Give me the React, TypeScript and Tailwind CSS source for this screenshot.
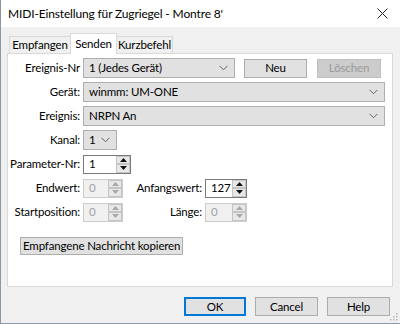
import React from "react";

const font = { fontFamily: 'Lato, "Liberation Sans", sans-serif' };

function Chevron({ className }: { className?: string }) {
  return (
    <svg width="9" height="6" viewBox="0 0 9 6" className={className}>
      <path d="M0.5 0.8 L4.5 4.8 L8.5 0.8" fill="none" stroke="#606060" strokeWidth="1" />
    </svg>
  );
}

function Combo({ value, width }: { value: string; width: string }) {
  return (
    <div
      className={`${width} h-[20px] flex items-center justify-between bg-[#e1e1e1] border border-[#adadad] pl-[5px] pr-[6px] text-black`}
    >
      <span className="leading-none whitespace-nowrap">{value}</span>
      <Chevron />
    </div>
  );
}

function Arrow({ up, disabled }: { up?: boolean; disabled?: boolean }) {
  return (
    <div className="flex-1 flex items-center justify-center bg-[#e8e8e8] border border-[#c4c4c4]">
      <svg width="7" height="4" viewBox="0 0 7 4">
        <path
          d={up ? "M0 4 L3.5 0 L7 4 Z" : "M0 0 L3.5 4 L7 0 Z"}
          fill={disabled ? "#a8a8a8" : "#111111"}
        />
      </svg>
    </div>
  );
}

function Spin({ value, width, disabled }: { value: string; width: string; disabled?: boolean }) {
  return (
    <div
      className={`${width} h-[19px] flex border shrink-0 ${
        disabled ? "border-[#cccccc] bg-[#f0f0f0]" : "border-[#7a7a7a] bg-white"
      }`}
    >
      <div
        className={`flex-1 flex items-center pl-[5px] ${disabled ? "text-[#a0a0a0]" : "text-black"}`}
      >
        {value}
      </div>
      <div className="w-[14px] flex flex-col">
        <Arrow up disabled={disabled} />
        <Arrow disabled={disabled} />
      </div>
    </div>
  );
}

function Btn({
  label,
  width,
  disabled,
  focused,
}: {
  label: string;
  width: string;
  disabled?: boolean;
  focused?: boolean;
}) {
  return (
    <div
      className={`${width} h-[19px] flex items-center justify-center shrink-0 ${
        disabled
          ? "bg-[#cccccc] border border-[#bfbfbf] text-[#9a9a9a]"
          : focused
          ? "bg-[#e1e1e1] border-2 border-[#0078d7] text-black"
          : "bg-[#e1e1e1] border border-[#adadad] text-black"
      }`}
    >
      {label}
    </div>
  );
}

function Label({ text, width }: { text: string; width: string }) {
  return <div className={`${width} text-right pr-[3px] shrink-0 whitespace-nowrap`}>{text}</div>;
}

export default function App() {
  return (
    <div
      style={font}
      className="w-[400px] h-[324px] flex flex-col bg-[#f0f0f0] border-l border-b border-[#8a97a5] text-[11.5px] tracking-[-0.15px] text-black overflow-hidden relative"
    >
      {/* title bar */}
      <div className="h-[27px] bg-white flex items-center justify-between pl-[7px] pr-[12px] shrink-0">
        <span className="text-[12px]">MIDI-Einstellung für Zugriegel - Montre 8'</span>
        <svg width="11" height="11" viewBox="0 0 11 11">
          <path d="M0.5 0.5 L10.5 10.5 M10.5 0.5 L0.5 10.5" stroke="#222" strokeWidth="1" />
        </svg>
      </div>

      {/* tabs */}
      <div className="flex items-end h-[26px] pl-[8px] shrink-0">
        <div className="h-[17px] w-[62px] flex items-center justify-center bg-[#f0f0f0] border border-b-0 border-[#d9d9d9]">
          Empfangen
        </div>
        <div className="h-[21px] w-[47px] flex items-center justify-center bg-white border border-b-0 border-[#d9d9d9] -mx-[1px] relative z-10 mb-[-1px]">
          Senden
        </div>
        <div className="h-[17px] w-[57px] flex items-center justify-center bg-[#f0f0f0] border border-b-0 border-[#d9d9d9]">
          Kurzbefehl
        </div>
      </div>

      {/* tab panel */}
      <div className="ml-[6px] w-[386px] h-[234px] bg-white border border-[#d9d9d9] flex flex-col pt-[4px] gap-[4px] shrink-0">
        <div className="flex items-center h-[20px]">
          <Label text="Ereignis-Nr" width="w-[75px]" />
          <Combo value="1 (Jedes Gerät)" width="w-[152px]" />
          <div className="w-[9px]" />
          <Btn label="Neu" width="w-[63px]" />
          <div className="w-[10px]" />
          <Btn label="Löschen" width="w-[64px]" disabled />
        </div>
        <div className="flex items-center h-[20px]">
          <Label text="Gerät:" width="w-[75px]" />
          <Combo value="winmm: UM-ONE" width="w-[302px]" />
        </div>
        <div className="flex items-center h-[20px]">
          <Label text="Ereignis:" width="w-[75px]" />
          <Combo value="NRPN An" width="w-[302px]" />
        </div>
        <div className="flex items-center h-[20px]">
          <Label text="Kanal:" width="w-[75px]" />
          <Combo value="1" width="w-[34px]" />
        </div>
        <div className="flex items-center h-[20px]">
          <Label text="Parameter-Nr:" width="w-[75px]" />
          <Spin value="1" width="w-[48px]" />
        </div>
        <div className="flex items-center h-[20px]">
          <Label text="Endwert:" width="w-[75px]" />
          <Spin value="0" width="w-[40px]" disabled />
          <Label text="Anfangswert:" width="w-[82px]" />
          <Spin value="127" width="w-[42px]" />
        </div>
        <div className="flex items-center h-[20px]">
          <Label text="Startposition:" width="w-[75px]" />
          <Spin value="0" width="w-[40px]" disabled />
          <Label text="Länge:" width="w-[82px]" />
          <Spin value="0" width="w-[42px]" disabled />
        </div>
        <div className="pl-[12px] pt-[11px]">
          <div className="inline-flex h-[18px] items-center px-[2px] bg-[#e1e1e1] border border-[#adadad]">
            Empfangene Nachricht kopieren
          </div>
        </div>
      </div>

      {/* bottom buttons */}
      <div className="flex justify-end gap-[9px] pr-[10px] pt-[10px]">
        <Btn label="OK" width="w-[62px]" focused />
        <Btn label="Cancel" width="w-[63px]" />
        <Btn label="Help" width="w-[63px]" />
      </div>

      {/* size grip */}
      <svg width="10" height="10" viewBox="0 0 10 10" className="absolute right-[2px] bottom-[2px]">
        {[
          [8, 2], [8, 5], [5, 5], [8, 8], [5, 8], [2, 8],
        ].map(([x, y], i) => (
          <rect key={i} x={x} y={y} width="1.5" height="1.5" fill="#b8b8b8" />
        ))}
      </svg>
    </div>
  );
}
